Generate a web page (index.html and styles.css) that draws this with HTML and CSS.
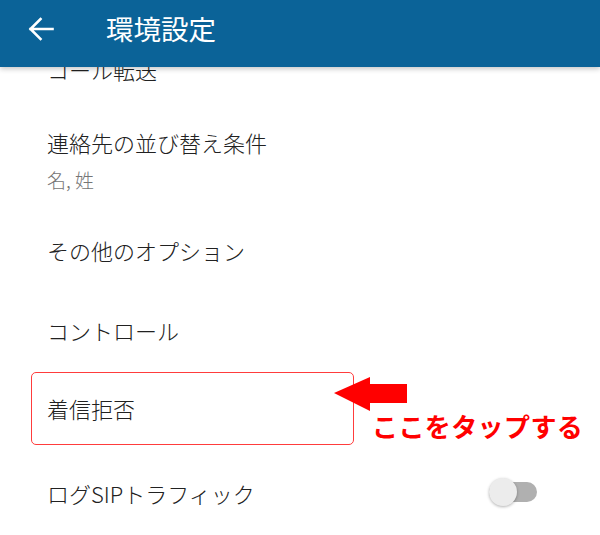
FILE: index.html
```html
<!DOCTYPE html>
<html lang="ja">

<head>
    <meta charset="UTF-8">
    <meta name="viewport" content="width=device-width, initial-scale=1.0">
    <title>環境設定</title>
    <link rel="stylesheet" href="styles.css">
</head>

<body>
    <div class="screen">
        <header class="app-bar">
            <svg class="back-icon" viewBox="0 0 26 24" width="26" height="24">
                <path d="M24.5 12H2.5M12.5 2L2.5 12l10 10" fill="none" stroke="#ffffff" stroke-width="2.6" stroke-linecap="square"/>
            </svg>
            <h1>環境設定</h1>
        </header>

        <ul class="pref-list">
            <li class="pref-item">コール転送</li>
            <li class="pref-item two-line">
                <span class="pref-title">連絡先の並び替え条件</span>
                <span class="pref-summary">名, 姓</span>
            </li>
            <li class="pref-item">その他のオプション</li>
            <li class="pref-item">コントロール</li>
            <li class="pref-item highlighted">
                着信拒否
                <span class="callout-box"></span>
                <svg class="callout-arrow" viewBox="0 0 80 42" width="80" height="42">
                    <polygon points="4,21 40,5 40,12 77,12 77,31 40,31 40,39" fill="#ff0000"/>
                </svg>
                <span class="callout-text">ここをタップする</span>
            </li>
            <li class="pref-item with-switch">
                ログSIPトラフィック
                <span class="switch">
                    <span class="switch-track"></span>
                    <span class="switch-thumb"></span>
                </span>
            </li>
        </ul>
    </div>
</body>

</html>
```

FILE: styles.css
```css
body {
    margin: 0;
    background: #ffffff;
    font-family: "Noto Sans CJK JP", "Noto Sans", sans-serif;
    color: #212121;
}

.screen {
    position: relative;
    width: 600px;
    height: 535px;
    overflow: hidden;
}

.app-bar {
    position: absolute;
    top: 0;
    left: 0;
    right: 0;
    height: 67px;
    z-index: 2;
    display: flex;
    align-items: center;
    padding: 0 0 10px 28px;
    box-sizing: border-box;
    background: #0b6398;
    box-shadow: 0 2px 5px rgba(0, 0, 0, 0.22);
}

.back-icon {
    display: block;
}

.app-bar h1 {
    margin: 0 0 0 52px;
    font-size: 27.5px;
    font-weight: 400;
    line-height: 1;
    color: #ffffff;
}

.pref-list {
    list-style: none;
    margin: 0;
    padding: 29px 0 0;
}

.pref-item {
    position: relative;
    height: 80px;
    display: flex;
    align-items: center;
    padding-left: 47px;
    font-size: 22px;
    font-weight: 300;
    box-sizing: border-box;
}

.pref-item.two-line {
    height: 101px;
    flex-direction: column;
    align-items: flex-start;
    justify-content: flex-start;
    padding-top: 18px;
}

.pref-item.highlighted {
    padding-bottom: 4px;
}

.pref-item.with-switch {
    padding-top: 6px;
}

.pref-title {
    line-height: 30px;
}

.pref-summary {
    margin-top: 11px;
    font-size: 19px;
    line-height: 24px;
    color: #757575;
}

.callout-box {
    position: absolute;
    left: 31px;
    top: 2px;
    width: 321px;
    height: 71px;
    border: 1.5px solid #ff3c3c;
    border-radius: 5px;
}

.callout-arrow {
    position: absolute;
    left: 330px;
    top: 2px;
}

.callout-text {
    position: absolute;
    left: 372px;
    top: 39px;
    font-size: 26px;
    font-weight: 700;
    line-height: 34px;
    letter-spacing: 0.4px;
    color: #ff0000;
    white-space: nowrap;
}

.with-switch .switch {
    position: absolute;
    left: 489px;
    top: 28px;
    width: 48px;
    height: 28px;
}

.switch-track {
    position: absolute;
    left: 0;
    top: 4px;
    width: 48px;
    height: 20px;
    border-radius: 10px;
    background: #b0b0b0;
}

.switch-thumb {
    position: absolute;
    left: 0;
    top: 0;
    width: 28px;
    height: 28px;
    border-radius: 50%;
    background: #ececec;
    box-shadow: 0 1px 3px rgba(0, 0, 0, 0.3);
}
```
